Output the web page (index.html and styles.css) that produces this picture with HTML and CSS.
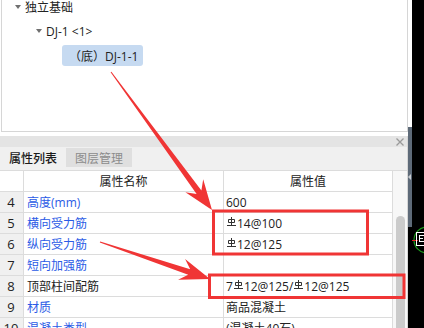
FILE: index.html
```html
<!DOCTYPE html>
<html lang="zh-CN">
<head>
<meta charset="utf-8">
<title>属性列表</title>
<link rel="stylesheet" href="styles.css">
</head>
<body>
<div class="app">
  <div class="main">
    <div class="tree">
      <div class="node n1"><span class="tri"></span>独立基础</div>
      <div class="node n2"><span class="tri"></span>DJ-1 &lt;1&gt;</div>
      <div class="node n3"><span class="sel">（底）DJ-1-1</span></div>
    </div>
    <div class="panel">
      <div class="titlebar">
        <svg class="close" width="8" height="8" viewBox="0 0 8 8"><path d="M0.5 0.5L7.5 7.5M7.5 0.5L0.5 7.5" stroke="#9a9a9a" stroke-width="1.3" fill="none"/></svg>
      </div>
      <div class="tabs">
        <div class="tab active">属性列表</div>
        <div class="tab">图层管理</div>
      </div>
      <div class="grid">
        <div class="table">
          <div class="row head"><div class="c num"></div><div class="c name center">属性名称</div><div class="c val center">属性值</div></div>
          <div class="row"><div class="c num">4</div><div class="c name blue">高度(mm)</div><div class="c val">600</div></div>
          <div class="row"><div class="c num">5</div><div class="c name blue">横向受力筋</div><div class="c val"><svg class="rb" width="9" height="9" viewBox="0 0 9 9"><path d="M4.5 0V8M1.5 2.5H7.5V5.5H1.5ZM0 8.5H9" stroke="#333" stroke-width="1" fill="none"/></svg>14@100</div></div>
          <div class="row"><div class="c num">6</div><div class="c name blue">纵向受力筋</div><div class="c val"><svg class="rb" width="9" height="9" viewBox="0 0 9 9"><path d="M4.5 0V8M1.5 2.5H7.5V5.5H1.5ZM0 8.5H9" stroke="#333" stroke-width="1" fill="none"/></svg>12@125</div></div>
          <div class="row"><div class="c num">7</div><div class="c name blue">短向加强筋</div><div class="c val"></div></div>
          <div class="row"><div class="c num">8</div><div class="c name">顶部柱间配筋</div><div class="c val">7<svg class="rb" width="9" height="9" viewBox="0 0 9 9"><path d="M4.5 0V8M1.5 2.5H7.5V5.5H1.5ZM0 8.5H9" stroke="#333" stroke-width="1" fill="none"/></svg>12@125/<svg class="rb" width="9" height="9" viewBox="0 0 9 9"><path d="M4.5 0V8M1.5 2.5H7.5V5.5H1.5ZM0 8.5H9" stroke="#333" stroke-width="1" fill="none"/></svg>12@125</div></div>
          <div class="row"><div class="c num">9</div><div class="c name blue">材质</div><div class="c val">商品混凝土</div></div>
          <div class="row"><div class="c num">10</div><div class="c name blue">混凝土类型</div><div class="c val">(混凝土40石)</div></div>
        </div>
        <div class="vscroll"><div class="thumb"></div></div>
      </div>
    </div>
  </div>
  <div class="side">
    <div class="strip">
      <div class="strip-top"></div>
      <div class="strip-mid"><span class="collapse"></span></div>
      <div class="strip-bot"></div>
    </div>
    <div class="canvas">
      <svg width="12" height="328" viewBox="0 0 12 328">
        <circle cx="15" cy="240" r="13" stroke="#1c9a1c" stroke-width="1.2" fill="none"/>
        <line x1="0" y1="240.5" x2="6" y2="240.5" stroke="#e02020" stroke-width="1"/>
        <rect x="4.5" y="232.5" width="9" height="13" stroke="#ffffff" stroke-width="1" fill="none"/>
        <path d="M7 235.5H12M7 238.5H11M7 241.5H12M7.5 235V242" stroke="#ffffff" stroke-width="1" fill="none"/>
      </svg>
    </div>
  </div>
</div>
<svg class="annot" width="424" height="328" viewBox="0 0 424 328">
  <polygon points="110.6,72.3 196.6,194.0 185.4,192.3 212,210 203.2,179.3 201.4,190.4 111.4,71.7" fill="#f03535"/>
  <polygon points="99.8,242.5 188.2,274.8 178.1,279.8 210,279 185.1,259.0 190.2,269.2 100.2,241.5" fill="#f03535"/>
  <rect x="213.5" y="211" width="154" height="43" stroke="#f03535" stroke-width="3" fill="none"/>
  <rect x="209.5" y="275" width="194.5" height="22.5" stroke="#f03535" stroke-width="3" fill="none"/>
</svg>
</body>
</html>
```

FILE: styles.css
```css
* { box-sizing: border-box; }
html, body { margin: 0; padding: 0; }
body {
  width: 424px;
  height: 328px;
  overflow: hidden;
  position: relative;
  background: #ffffff;
  font-family: "Open Sans", "Noto Sans CJK SC", sans-serif;
  font-size: 12px;
  color: #222;
}
.app { display: flex; height: 328px; }
.main { width: 408px; display: flex; flex-direction: column; }

.tree {
  flex: none;
  margin-left: 1px;
  height: 132px;
  border: 1px solid #d6d6d6;
  border-top: 0;
  background: #fff;
}
.node { display: flex; align-items: center; white-space: nowrap; }
.n1 { height: 14px; padding-left: 13px; }
.n2 { height: 14px; margin-top: 10px; padding-left: 34px; }
.n3 { margin-top: 7px; padding-left: 60px; }
.tri {
  width: 0; height: 0;
  border-left: 3px solid transparent;
  border-right: 3px solid transparent;
  border-top: 4px solid #707070;
  margin-right: 4px;
}
.sel {
  display: flex; align-items: center;
  height: 21px;
  padding: 0 5px 0 7px;
  background: #c6daf1;
  border-radius: 3px;
}

.panel {
  margin-top: 4px;
  flex: 1;
  min-height: 0;
  border-right: 1px solid #d6d6d6;
  display: flex; flex-direction: column;
}
.titlebar {
  flex: none;
  height: 11px;
  background: #e4e4e4;
  display: flex; align-items: center; justify-content: flex-end;
  padding-right: 3px;
}
.tabs {
  flex: none;
  height: 23px;
  background: #f0f0f0;
  display: flex; align-items: flex-start;
}
.tab {
  width: 66px; height: 19px; margin-top: 1px;
  display: flex; align-items: center; justify-content: center;
  color: #8c8c8c;
  background: #dfdfdf;
}
.tab.active { color: #1a1a1a; background: #f0f0f0; font-weight: 500; }

.grid { display: flex; border-top: 1px solid #dcdcdc; flex: 1; min-height: 0; }
.table { width: 393px; flex: none; }
.row {
  display: grid;
  grid-template-columns: 24px 200px 169px;
  height: 21px;
  border-bottom: 1px solid #dcdcdc;
}
.c {
  display: flex; align-items: center;
  border-right: 1px solid #dcdcdc;
  white-space: nowrap; overflow: hidden;
}
.num { justify-content: center; background: #f0f0f0; font-size: 13px; padding-right: 1px; }
.head .num { background: #fff; }
.name { padding-left: 3px; }
.val { padding-left: 2px; }
.center { justify-content: center; padding-left: 0; }
.blue { color: #2b5be6; }
.rb { margin: -4px 1px 0 1px; flex: none; }

.vscroll { width: 14px; flex: none; background: #f7f7f7; padding: 45px 0 0 3px; }
.thumb { width: 9px; height: 140px; background: #cbcbcb; border-radius: 5px; }

.side { width: 16px; display: flex; }
.strip { width: 4px; display: flex; flex-direction: column; }
.strip-top { height: 127px; background: #fff; }
.strip-mid { height: 100px; background: #5e6a78; display: flex; align-items: center; }
.strip-bot { flex: 1; background: #000; }
.collapse {
  width: 0; height: 0;
  border-right: 3px solid #c9cdd2;
  border-top: 3px solid transparent;
  border-bottom: 3px solid transparent;
}
.canvas { width: 12px; background: #000; }

.annot { position: absolute; left: 0; top: 0; pointer-events: none; }
```
